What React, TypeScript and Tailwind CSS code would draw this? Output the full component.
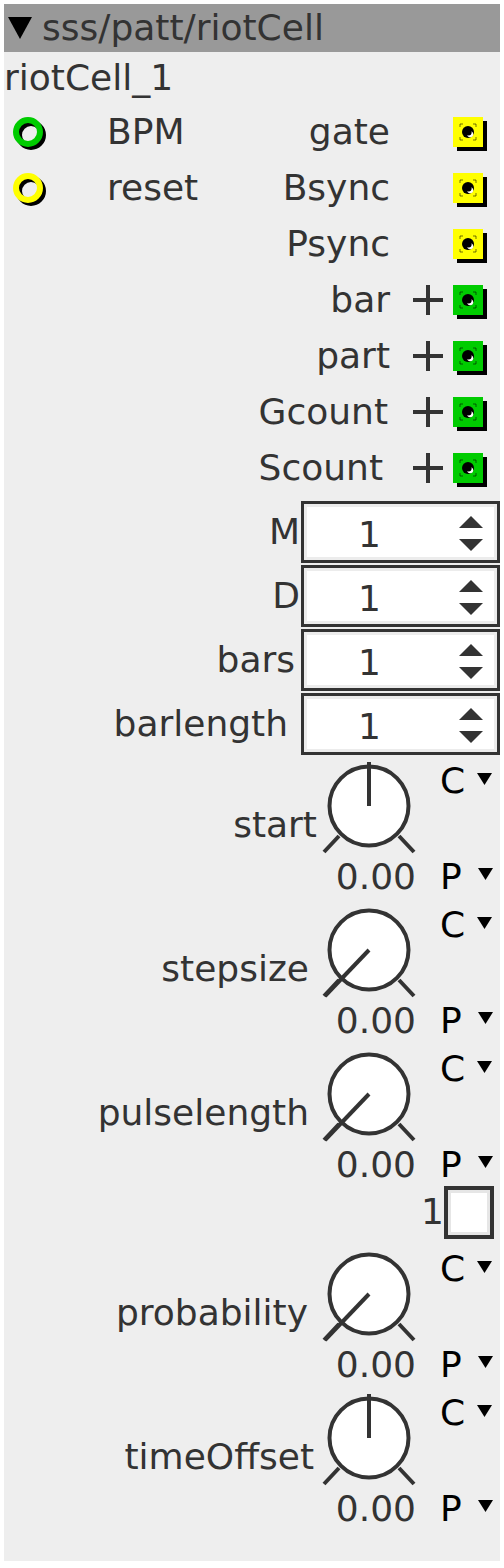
const ink = "#333333";

type PortRow = {
  inColor?: string;
  inLabel?: string;
  out: string;
  outColor: string;
  plus?: boolean;
  pr?: string;
};

const rows: PortRow[] = [
  { inColor: "#00cc00", inLabel: "BPM", out: "gate", outColor: "#ffff00" },
  { inColor: "#ffff00", inLabel: "reset", out: "Bsync", outColor: "#ffff00" },
  { out: "Psync", outColor: "#ffff00" },
  { out: "bar", outColor: "#00cc00", plus: true },
  { out: "part", outColor: "#00cc00", plus: true },
  { out: "Gcount", outColor: "#00cc00", plus: true, pr: "pr-[2px]" },
  { out: "Scount", outColor: "#00cc00", plus: true, pr: "pr-[7px]" },
];

const numbers = [
  { label: "M", pr: "pr-[1px]" },
  { label: "D", pr: "pr-[1px]" },
  { label: "bars", pr: "pr-[6px]" },
  { label: "barlength", pr: "pr-[13px]" },
];

function InPort({ color }: { color: string }) {
  return (
    <svg width="40" height="40" viewBox="0 0 40 40" className="ml-[9px]">
      <circle cx="18" cy="23" r="12" fill="none" stroke="#000" strokeWidth="6" />
      <circle cx="15" cy="20" r="12" fill="none" stroke={color} strokeWidth="6" />
    </svg>
  );
}

function OutPort({ color }: { color: string }) {
  return (
    <svg width="36" height="36" viewBox="0 0 36 36" className="mt-[6px]">
      <rect x="4" y="4" width="30" height="30" fill="#000" />
      <rect x="0" y="0" width="30" height="30" fill={color} />
      <g stroke="#000" strokeOpacity="0.55" strokeWidth="1" fill="none">
        <path d="M7 10V7h3M20 7h3v3M23 20v3h-3M10 23H7v-3" />
      </g>
      <circle cx="15" cy="15" r="6" fill="#000" />
      <circle cx="17.2" cy="17.2" r="3" fill="#fff" />
      <circle cx="15.6" cy="15.6" r="3" fill="#000" />
    </svg>
  );
}

function Plus() {
  return (
    <svg width="30" height="30" viewBox="0 0 30 30" className="ml-[23px]">
      <rect x="0" y="13" width="30" height="4" fill={ink} />
      <rect x="13" y="0" width="4" height="30" fill={ink} />
    </svg>
  );
}

function Tri({ className }: { className: string }) {
  return (
    <svg width="15" height="12" viewBox="0 0 15 12" className={className}>
      <polygon points="0,0 15,0 7.5,12" fill="#000" />
    </svg>
  );
}

function Knob({ label, diag, h, lpr }: { label: string; diag?: boolean; h: string; lpr: string }) {
  return (
    <div className={`flex ${h}`}>
      <div className={`flex-1 text-right leading-none pt-[45px] ${lpr}`}>{label}</div>
      <div className="w-[96px] flex flex-col">
        <svg width="96" height="94" viewBox="0 0 96 94">
          <circle cx="48" cy="44" r="39.5" fill="#fff" stroke={ink} strokeWidth="4" />
          {diag ? (
            <line x1="48" y1="44" x2="4" y2="90" stroke={ink} strokeWidth="4" />
          ) : (
            <line x1="48" y1="0" x2="48" y2="44" stroke={ink} strokeWidth="4" />
          )}
          <line x1="3" y1="90" x2="18" y2="74" stroke={ink} strokeWidth="4" />
          <line x1="78" y1="74" x2="93" y2="90" stroke={ink} strokeWidth="4" />
        </svg>
        <div className="leading-none mt-[3px] text-right pr-[1px]">0.00</div>
      </div>
      <div className="w-[83px] pl-[23px] text-black">
        <div className="h-[97px] pt-[1px] leading-none flex items-start">
          <span>C</span>
          <Tri className="ml-[12px] mt-[10px]" />
        </div>
        <div className="leading-none flex items-start">
          <span>P</span>
          <Tri className="ml-[16px] mt-[9px]" />
        </div>
      </div>
    </div>
  );
}

export default function App() {
  return (
    <div className="bg-white p-1 w-[504px] min-h-[1568px]">
      <div className="bg-[#eeeeee] w-[496px] text-[36px] text-[#333] font-['DejaVu_Sans',sans-serif]">
        {/* title bar */}
        <div className="h-12 bg-[#999999] flex items-center pl-[4px] leading-none">
          <svg width="24" height="22" viewBox="0 0 24 22">
            <polygon points="0,0 24,0 12,22" fill="#000" />
          </svg>
          <span className="ml-[10px]">sss/patt/riotCell</span>
        </div>
        <div className="h-[52px] leading-[52px]">riotCell_1</div>

        {/* ports */}
        {rows.map((r) => (
          <div key={r.out} className="h-14 flex items-center leading-none">
            <div className="w-[103px] flex items-center">{r.inColor && <InPort color={r.inColor} />}</div>
            <div className="flex-1">{r.inLabel}</div>
            <div className={r.pr}>{r.out}</div>
            <div className="w-[63px] flex items-center">{r.plus && <Plus />}</div>
            <div className="w-[47px] flex items-center">
              <OutPort color={r.outColor} />
            </div>
          </div>
        ))}

        {/* integer boxes */}
        <div className="mt-[5px]">
          {numbers.map((n) => (
            <div key={n.label} className="h-[62px] mb-[2px] flex items-center leading-none">
              <div className={`flex-1 text-right ${n.pr}`}>{n.label}</div>
              <div className="w-[199px] h-full border-[3px] border-[#333]">
                <div className="h-full bg-white border-[3px] border-[#ececec] flex items-center">
                  <span className="w-[125px] text-center mt-[6px]">1</span>
                  <svg width="24" height="36" viewBox="0 0 24 36" className="ml-[27px] mt-[4px]">
                    <polygon points="12,0 24,12 0,12" fill={ink} />
                    <polygon points="0,23 24,23 12,35" fill={ink} />
                  </svg>
                </div>
              </div>
            </div>
          ))}
        </div>

        {/* dials */}
        <div className="mt-[7px]">
          <Knob label="start" h="h-[144px]" lpr="pr-[4px]" />
          <Knob label="stepsize" diag h="h-[144px]" lpr="pr-[12px]" />
          <Knob label="pulselength" diag h="h-[136px]" lpr="pr-[12px]" />
          <div className="h-[64px] flex justify-end items-start">
            <span className="leading-none mt-[8px]">1</span>
            <div className="w-[50px] h-[53px] mr-[6px] border-4 border-[#333]">
              <div className="h-full bg-white border-[3px] border-[#e6e6e6]" />
            </div>
          </div>
          <Knob label="probability" diag h="h-[144px]" lpr="pr-[13px]" />
          <Knob label="timeOffset" h="h-[167px]" lpr="pr-[7px]" />
        </div>
      </div>
    </div>
  );
}
